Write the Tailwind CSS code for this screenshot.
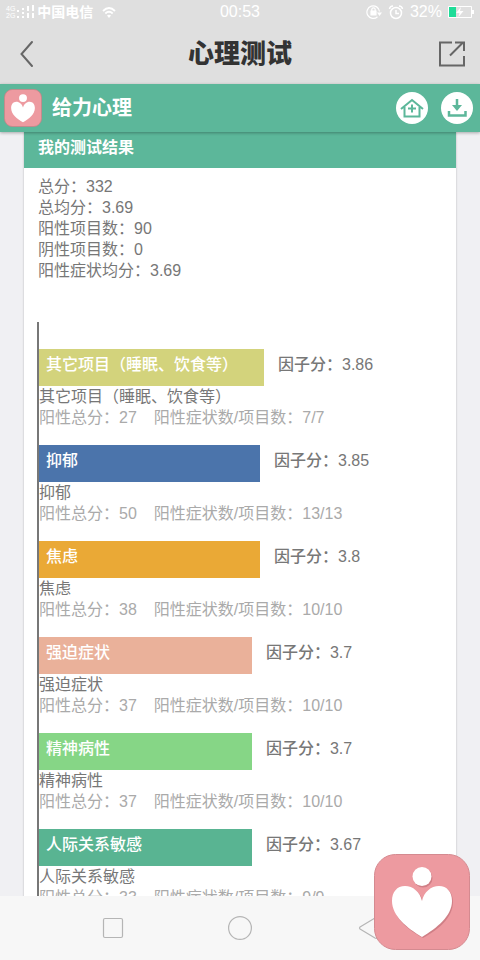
<!doctype html>
<html lang="zh-CN">

<head>
  <meta charset="UTF-8" />
  <title>心理测试</title>
  <meta name="viewport" content="width=device-width, initial-scale=1.0" />
  <script src="https://cdn.jsdelivr.net/npm/@tailwindcss/browser@4"></script>
</head>

<body class="h-screen flex flex-col overflow-hidden bg-[#f0f0f3] text-base text-[#777] font-['Liberation_Sans','Noto_Sans_CJK_SC',sans-serif]">

  <!-- Status bar -->
  <div class="h-6 shrink-0 bg-[#dfdfdf] text-white grid grid-cols-3 items-center px-1.5 text-sm leading-6">
    <div class="flex items-center gap-0.5">
      <div class="text-[7px] leading-[7px]">
        <p>4G</p>
        <p>2G</p>
      </div>
      <svg class="w-[18px] h-4" viewBox="0 0 18 16" fill="none" stroke="currentColor" stroke-width="2">
        <path d="M1 6v2M1 12v2M6 4v2M6 8v2M6 12v2M11 2v5M11 9v5M16 1v6M16 9v5" />
      </svg>
      <span class="font-bold whitespace-nowrap">中国电信</span>
      <svg class="w-4 h-4 ml-1.5" viewBox="0 0 16 16" fill="none" stroke="currentColor" stroke-width="1.800">
        <path d="M2 7Q8 1 14 7M4.300 9.500Q8 6 11.700 9.500" />
        <path d="M6 11.500Q8 10 10 11.500L8 14z" fill="currentColor" stroke="none" />
      </svg>
    </div>
    <span class="text-center text-base">00:53</span>
    <div class="flex items-center justify-end gap-1.5">
      <svg class="w-4 h-4" viewBox="0 0 16 16" fill="none" stroke="currentColor" stroke-width="1.200">
        <path d="M11.500 12.800A6.300 6.300 0 1 1 13.500 7.500" />
        <path d="M11 8.500h5L13.500 12z" fill="currentColor" stroke="none" />
        <path d="M5.800 7V5.500a1.700 1.700 0 0 1 3.400 0V7" />
        <path d="M5 7h5v4H5z" fill="currentColor" />
      </svg>
      <svg class="w-4 h-4" viewBox="0 0 16 16" fill="none" stroke="currentColor" stroke-width="1.500">
        <circle cx="8" cy="9" r="5.500" />
        <path d="M8 6v3.500h3M1.500 5Q2 2 5 2M14.500 5Q14 2 11 2" />
      </svg>
      <span class="text-base">32%</span>
      <svg class="w-[26px] h-3" viewBox="0 0 26 12">
        <path d="M.5.5h23v11H.5z" fill="none" stroke="#fff" />
        <path d="M24 4h2v4h-2z" fill="#fff" />
        <path d="M1 1h7v10H1z" fill="#1fdc98" />
        <path d="M13 1 8 7h3.500l-1 4L15.500 5H12z" fill="#fff" />
      </svg>
    </div>
  </div>

  <!-- Title bar -->
  <header class="h-15 shrink-0 bg-[#dfdfdf] text-[#333] flex items-center justify-between px-3">
    <button aria-label="返回">
      <svg class="w-8 h-7" viewBox="0 0 32 28" fill="none" stroke="#666" stroke-width="2" stroke-linecap="round">
        <path d="M20 2 9.500 14l10.500 12" />
      </svg>
    </button>
    <h1 class="text-[26px] leading-8 font-black">心理测试</h1>
    <button aria-label="分享">
      <svg class="w-8 h-8" viewBox="0 0 32 32" fill="none" stroke="#666" stroke-width="2">
        <path d="M16 4.500H4v23h24V18M14 17.500 27 4.500M19 4.500h9V13" />
      </svg>
    </button>
  </header>

  <!-- App header -->
  <div class="relative h-12 shrink-0 bg-[#5cb79a] text-white flex items-center pl-1 pr-[7px] shadow-[0_1px_3px_rgba(0,0,0,0.3)]">
    <svg class="w-[38px] h-[38px]" viewBox="0 0 96 96">
      <rect x="1" y="1" width="94" height="94" rx="21" fill="#ed9aa0" stroke="#c98287" stroke-width="2" />
      <circle cx="48" cy="23" r="10" fill="#fff" />
      <path d="M48 47C46 38 39 32 31 32 23 32 18 39 18 48c0 16 15 28 30 36 15-8 30-20 30-36 0-9-5-16-13-16-8 0-15 6-17 15z" fill="#fff" />
    </svg>
    <span class="ml-2.5 text-xl font-bold">给力心理</span>
    <div class="ml-auto flex gap-[13px]">
      <a href="#" aria-label="首页">
        <svg class="w-8 h-8" viewBox="0 0 32 32" fill="none" stroke="#5cb79a" stroke-width="2">
          <circle cx="16" cy="16" r="16" fill="#fff" stroke="none" />
          <path d="M5 17 16 8l11 9M8.500 15v9.500h15V15M16 12.500v8M12 16.500h8" />
        </svg>
      </a>
      <a href="#" aria-label="下载">
        <svg class="w-8 h-8" viewBox="0 0 32 32" fill="none" stroke="#5cb79a" stroke-width="2.500">
          <circle cx="16" cy="16" r="16" fill="#fff" stroke="none" />
          <path d="M8 19v4.500h16.500V19M16 7v7" />
          <path d="M11 13h10l-5 6z" fill="#5cb79a" stroke="none" />
        </svg>
      </a>
    </div>
  </div>

  <!-- Test result -->
  <main class="flex-1 min-h-0 overflow-hidden px-6">
    <section class="bg-white shadow-[0_0_2px_rgba(0,0,0,0.25)]">
      <h2 class="h-9 bg-[#5cb79a] text-white font-bold px-3.5 pt-1 leading-6">我的测试结果</h2>
      <div class="px-3.5 pt-2 leading-[21px]">
        <p>总分：332</p>
        <p>总均分：3.69</p>
        <p>阳性项目数：90</p>
        <p>阴性项目数：0</p>
        <p>阳性症状均分：3.69</p>
      </div>

      <div class="mx-[13px] mt-[41px] pt-[27px] border-l-2 border-[#777] leading-[21px]">
        <div class="h-24">
          <div class="flex gap-3.5 leading-8">
            <div class="h-[37px] bg-[#d3d37c] text-white font-medium pl-[7px]" style="width: 55.7%">其它项目（睡眠、饮食等）</div>
            <span class="font-medium">因子分：3.86</span>
          </div>
          <p>其它项目（睡眠、饮食等）</p>
          <p class="flex gap-[17px] text-[#aaa]"><span>阳性总分：27</span><span>阳性症状数/项目数：7/7</span></p>
        </div>
        <div class="h-24">
          <div class="flex gap-3.5 leading-8">
            <div class="h-[37px] bg-[#4b74ab] text-white font-medium pl-[7px]" style="width: 54.7%">抑郁</div>
            <span class="font-medium">因子分：3.85</span>
          </div>
          <p>抑郁</p>
          <p class="flex gap-[17px] text-[#aaa]"><span>阳性总分：50</span><span>阳性症状数/项目数：13/13</span></p>
        </div>
        <div class="h-24">
          <div class="flex gap-3.5 leading-8">
            <div class="h-[37px] bg-[#eaa936] text-white font-medium pl-[7px]" style="width: 54.7%">焦虑</div>
            <span class="font-medium">因子分：3.8</span>
          </div>
          <p>焦虑</p>
          <p class="flex gap-[17px] text-[#aaa]"><span>阳性总分：38</span><span>阳性症状数/项目数：10/10</span></p>
        </div>
        <div class="h-24">
          <div class="flex gap-3.5 leading-8">
            <div class="h-[37px] bg-[#eab19a] text-white font-medium pl-[7px]" style="width: 52.7%">强迫症状</div>
            <span class="font-medium">因子分：3.7</span>
          </div>
          <p>强迫症状</p>
          <p class="flex gap-[17px] text-[#aaa]"><span>阳性总分：37</span><span>阳性症状数/项目数：10/10</span></p>
        </div>
        <div class="h-24">
          <div class="flex gap-3.5 leading-8">
            <div class="h-[37px] bg-[#86d686] text-white font-medium pl-[7px]" style="width: 52.7%">精神病性</div>
            <span class="font-medium">因子分：3.7</span>
          </div>
          <p>精神病性</p>
          <p class="flex gap-[17px] text-[#aaa]"><span>阳性总分：37</span><span>阳性症状数/项目数：10/10</span></p>
        </div>
        <div class="h-24">
          <div class="flex gap-3.5 leading-8">
            <div class="h-[37px] bg-[#59b492] text-white font-medium pl-[7px]" style="width: 52.7%">人际关系敏感</div>
            <span class="font-medium">因子分：3.67</span>
          </div>
          <p>人际关系敏感</p>
          <p class="flex gap-[17px] text-[#aaa]"><span>阳性总分：33</span><span>阳性症状数/项目数：9/9</span></p>
        </div>
      </div>
    </section>
  </main>

  <!-- System navigation -->
  <nav class="h-16 shrink-0 bg-[#f7f7f7] flex items-center justify-center gap-[103px]">
    <button aria-label="最近任务">
      <svg class="w-6 h-6" viewBox="0 0 24 24" fill="none" stroke="#b5b5b5" stroke-width="1.200">
        <rect x="2.500" y="2.500" width="19" height="19" rx="1.500" />
      </svg>
    </button>
    <button aria-label="主屏幕">
      <svg class="w-6 h-6" viewBox="0 0 24 24" fill="none" stroke="#b5b5b5" stroke-width="1.200">
        <circle cx="12" cy="12" r="11.400" />
      </svg>
    </button>
    <button aria-label="后退">
      <svg class="w-6 h-6" viewBox="0 0 24 24" fill="none" stroke="#b5b5b5" stroke-width="1.200" stroke-linejoin="round">
        <path d="M5 11Q4 12 5 13L20 22q2 1 2-1V3q0-2-2-1z" />
      </svg>
    </button>
  </nav>

  <!-- Floating button -->
  <button class="fixed right-2.5 bottom-2.5" aria-label="给力心理">
    <svg class="w-24 h-24" viewBox="0 0 96 96">
      <rect x=".5" y=".5" width="95" height="95" rx="21" fill="#ed9aa0" stroke="#d48a90" />
      <circle cx="49" cy="24" r="9.500" fill="#d07f86" />
      <circle cx="48" cy="22.500" r="9.500" fill="#fff" />
      <path d="M49 48C47 39 40 33 32 33 24 33 19 39 19 48c0 16 15 28 30 36 15-8 30-20 30-36 0-9-5-15-13-15-8 0-15 6-17 15z" fill="#d07f86" />
      <path d="M48 47C46 38 39 32 31 32 23 32 18 38 18 47c0 15 15 27 30 36 15-9 30-21 30-36 0-9-5-15-13-15-8 0-15 6-17 15z" fill="#fff" />
    </svg>
  </button>

</body>

</html>
